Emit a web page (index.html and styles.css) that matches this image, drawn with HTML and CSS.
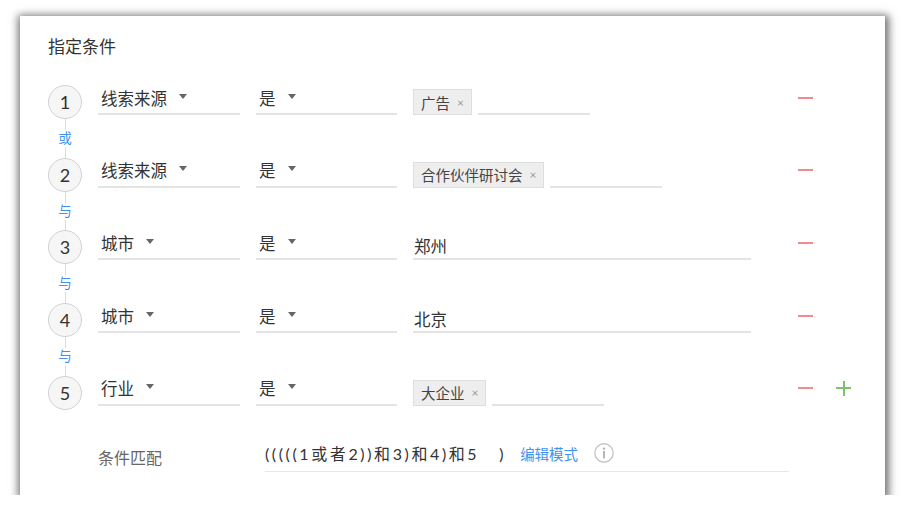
FILE: index.html
```html
<!DOCTYPE html>
<html lang="zh">
<head>
<meta charset="utf-8">
<title>指定条件</title>
<link rel="stylesheet" href="styles.css">
</head>
<body>
<div class="card">
  <h2 class="title">指定条件</h2>
  <div class="conds">
    <div class="cond">
      <div class="num">1</div>
      <div class="select"><span>线索来源</span><i class="caret"></i></div>
      <div class="select"><span>是</span><i class="caret"></i></div>
      <div class="value">
        <span class="tag">广告<span class="x">×</span></span>
        <span class="input"></span>
      </div>
      <div class="actions"><span class="minus"></span></div>
    </div>
    <div class="link"><span class="line"></span><span class="op">或</span><span class="line"></span></div>
    <div class="cond">
      <div class="num">2</div>
      <div class="select"><span>线索来源</span><i class="caret"></i></div>
      <div class="select"><span>是</span><i class="caret"></i></div>
      <div class="value">
        <span class="tag">合作伙伴研讨会<span class="x">×</span></span>
        <span class="input"></span>
      </div>
      <div class="actions"><span class="minus"></span></div>
    </div>
    <div class="link"><span class="line"></span><span class="op">与</span><span class="line"></span></div>
    <div class="cond">
      <div class="num">3</div>
      <div class="select"><span>城市</span><i class="caret"></i></div>
      <div class="select"><span>是</span><i class="caret"></i></div>
      <div class="value text">郑州</div>
      <div class="actions"><span class="minus"></span></div>
    </div>
    <div class="link"><span class="line"></span><span class="op">与</span><span class="line"></span></div>
    <div class="cond">
      <div class="num">4</div>
      <div class="select"><span>城市</span><i class="caret"></i></div>
      <div class="select"><span>是</span><i class="caret"></i></div>
      <div class="value text">北京</div>
      <div class="actions"><span class="minus"></span></div>
    </div>
    <div class="link"><span class="line"></span><span class="op">与</span><span class="line"></span></div>
    <div class="cond">
      <div class="num">5</div>
      <div class="select"><span>行业</span><i class="caret"></i></div>
      <div class="select"><span>是</span><i class="caret"></i></div>
      <div class="value">
        <span class="tag">大企业<span class="x">×</span></span>
        <span class="input"></span>
      </div>
      <div class="actions"><span class="minus"></span><span class="plus"></span></div>
    </div>
  </div>
  <div class="match">
    <div class="match-label">条件匹配</div>
    <div class="expr">
      <span class="expr-text">(((((1或者2))和3)和4)和5<span class="close">)</span></span>
      <a class="edit">编辑模式</a>
      <svg class="info" width="20" height="20" viewBox="0 0 20 20">
        <circle cx="10" cy="10" r="9.2" fill="none" stroke="#c6c6c6" stroke-width="1.4"/>
        <circle cx="10" cy="5.6" r="1.2" fill="#b0b0b0"/>
        <rect x="9.1" y="8" width="1.8" height="7.4" fill="#b0b0b0"/>
      </svg>
    </div>
  </div>
</div>
</body>
</html>
```

FILE: styles.css
```css
html, body {
  margin: 0;
  background: #ffffff;
}
body {
  font-family: Lato, "Noto Sans CJK SC", sans-serif;
  color: #333333;
}
.card {
  margin: 16px 0 0 20px;
  width: 865px;
  height: 479px;
  box-sizing: border-box;
  background: #ffffff;
  box-shadow: 1px 2px 8px 3px rgba(0, 0, 0, 0.55);
  padding: 19px 28px 0 28px;
}
.title {
  margin: 0;
  font-size: 17px;
  font-weight: normal;
  line-height: 24px;
  color: #333333;
}
.conds {
  margin-top: 26px;
  display: flex;
  flex-direction: column;
}
.cond {
  display: grid;
  grid-template-columns: 34px 142px 141px 338px auto;
  column-gap: 16px;
  align-items: start;
  height: 34px;
}
.num {
  width: 34px;
  height: 34px;
  box-sizing: border-box;
  border-radius: 50%;
  border: 1px solid #d2d2d2;
  background: #f6f6f6;
  display: flex;
  align-items: center;
  justify-content: center;
  font-size: 18px;
  color: #333333;
}
.select {
  display: flex;
  align-items: center;
  height: 30px;
  box-sizing: border-box;
  border-bottom: 2px solid #e4e4e4;
  padding-left: 3px;
  padding-bottom: 3px;
  font-size: 16.5px;
  color: #333333;
}
.caret {
  width: 0;
  height: 0;
  border-left: 4.5px solid transparent;
  border-right: 4.5px solid transparent;
  border-top: 5px solid #666666;
  margin-left: 12px;
  margin-top: -3px;
}
.value {
  display: flex;
  align-items: flex-end;
  height: 30px;
}
.value.text {
  box-sizing: border-box;
  border-bottom: 2px solid #e4e4e4;
  padding-left: 1px;
  align-items: center;
  padding-top: 3px;
  font-size: 16.5px;
}
.tag {
  display: flex;
  align-items: center;
  height: 26px;
  box-sizing: border-box;
  padding: 0 7px;
  background: #eeeeee;
  border: 1px solid #dedede;
  font-size: 14.5px;
  color: #444444;
}
.x {
  margin-left: 7px;
  font-size: 12px;
  color: #9a9a9a;
}
.input {
  width: 112px;
  height: 30px;
  margin-left: 6px;
  box-sizing: border-box;
  border-bottom: 2px solid #e4e4e4;
}
.actions {
  display: flex;
  align-items: center;
  height: 25px;
  padding-left: 31px;
  gap: 23px;
}
.minus {
  width: 15px;
  height: 2px;
  background: #f28a8a;
}
.plus {
  position: relative;
  width: 15px;
  height: 15px;
}
.plus::before,
.plus::after {
  content: "";
  position: absolute;
  background: #7dc36a;
}
.plus::before {
  left: 0;
  top: 6.5px;
  width: 15px;
  height: 2px;
}
.plus::after {
  left: 6.5px;
  top: 0;
  width: 2px;
  height: 15px;
}
.link {
  width: 34px;
  height: 38.7px;
  display: flex;
  flex-direction: column;
  align-items: center;
}
.line {
  flex: 1;
  width: 1px;
  background: #dcdcdc;
}
.op {
  font-size: 13.5px;
  line-height: 17px;
  color: #3f93ee;
}
.match {
  margin-top: 32px;
  margin-left: 50px;
  display: flex;
  align-items: flex-end;
}
.match-label {
  width: 167px;
  font-size: 16px;
  color: #666666;
  line-height: 24px;
  padding-bottom: 2px;
}
.expr {
  width: 524px;
  height: 30px;
  box-sizing: border-box;
  border-bottom: 1px solid #e8e8e8;
  display: flex;
  align-items: center;
  padding-bottom: 6px;
}
.expr-text {
  font-size: 16px;
  letter-spacing: 2.6px;
  color: #333333;
}
.close {
  margin-left: 20px;
}
.edit {
  margin-left: 14px;
  font-size: 14.5px;
  color: #3f93ee;
}
.info {
  margin-left: 16px;
}
```
